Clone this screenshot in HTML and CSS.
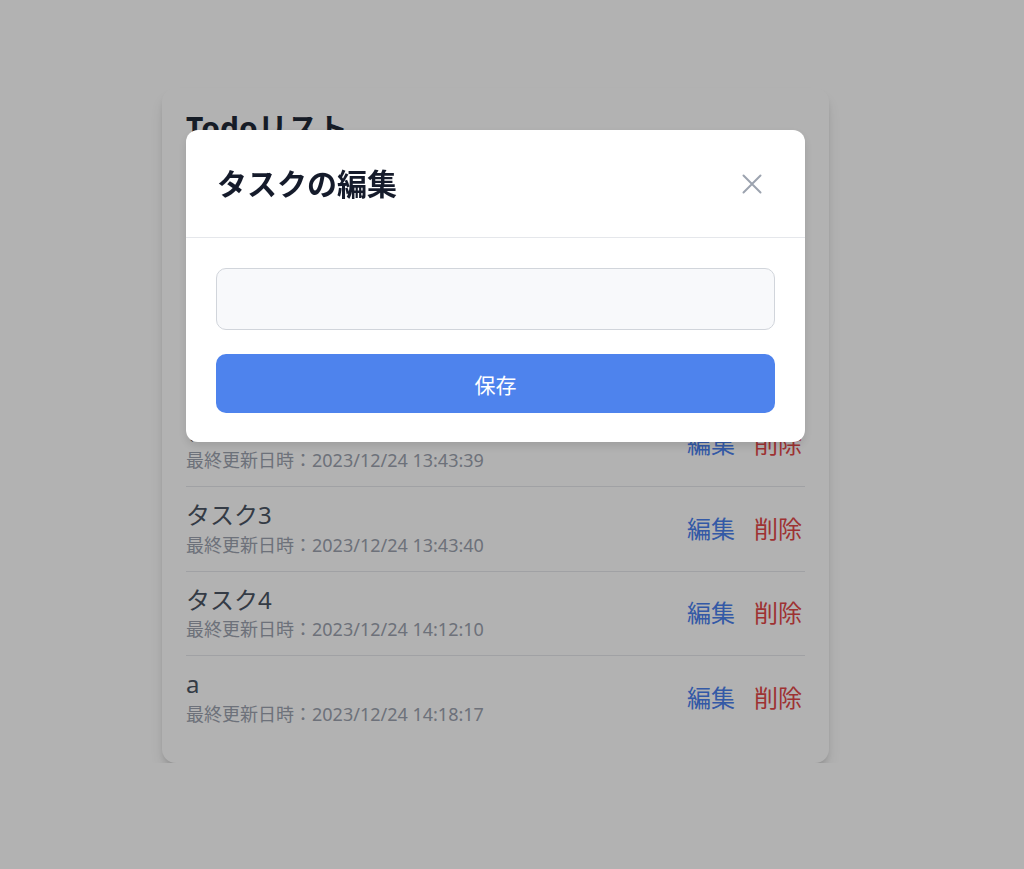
FILE: index.html
```html
<!DOCTYPE html>
<html lang="ja">
<head>
<meta charset="utf-8">
<title>Todoリスト</title>
<link rel="stylesheet" href="styles.css">
</head>
<body>
<div class="page">
  <div class="card">
    <h1 class="card-title">Todoリスト</h1>
    <form class="add-form">
      <input class="add-input" type="text">
      <button class="add-button" type="button">追加</button>
    </form>
    <ul class="task-list">
      <li class="task">
        <div class="task-info">
          <div class="task-name">タスク1</div>
          <div class="task-date">最終更新日時：2023/12/24 13:43:38</div>
        </div>
        <div class="task-actions"><button class="btn-edit">編集</button><button class="btn-delete">削除</button></div>
      </li>
      <li class="task">
        <div class="task-info">
          <div class="task-name">タスク2</div>
          <div class="task-date">最終更新日時：2023/12/24 13:43:39</div>
        </div>
        <div class="task-actions"><button class="btn-edit">編集</button><button class="btn-delete">削除</button></div>
      </li>
      <li class="task">
        <div class="task-info">
          <div class="task-name">タスク3</div>
          <div class="task-date">最終更新日時：2023/12/24 13:43:40</div>
        </div>
        <div class="task-actions"><button class="btn-edit">編集</button><button class="btn-delete">削除</button></div>
      </li>
      <li class="task">
        <div class="task-info">
          <div class="task-name">タスク4</div>
          <div class="task-date">最終更新日時：2023/12/24 14:12:10</div>
        </div>
        <div class="task-actions"><button class="btn-edit">編集</button><button class="btn-delete">削除</button></div>
      </li>
      <li class="task">
        <div class="task-info">
          <div class="task-name">a</div>
          <div class="task-date">最終更新日時：2023/12/24 14:18:17</div>
        </div>
        <div class="task-actions"><button class="btn-edit">編集</button><button class="btn-delete">削除</button></div>
      </li>
    </ul>
  </div>
</div>

<div class="overlay">
  <div class="overlay-inner">
    <div class="modal">
      <div class="modal-header">
        <h2 class="modal-title">タスクの編集</h2>
        <button class="modal-close" type="button" aria-label="閉じる">
          <svg width="20" height="20" viewBox="0 0 20 20" fill="none" stroke="#9ca3af" stroke-width="2" stroke-linecap="round">
            <path d="M1.5 1.5L18.5 18.5M18.5 1.5L1.5 18.5"/>
          </svg>
        </button>
      </div>
      <div class="modal-body">
        <input class="modal-input" type="text">
        <button class="save-button" type="button">保存</button>
      </div>
    </div>
  </div>
</div>
</body>
</html>
```

FILE: styles.css
```css
* {
  box-sizing: border-box;
}

html, body {
  margin: 0;
  padding: 0;
  background: #ffffff;
  font-family: "Noto Sans", "Noto Sans CJK JP", sans-serif;
}

.page {
  width: 991px;
  padding-top: 88px;
}

.card {
  width: 667px;
  margin: 0 auto;
  background: #ffffff;
  border-radius: 14px;
  padding: 22px 24px 23px;
  box-shadow: 0 10px 15px -3px rgba(0, 0, 0, 0.14), 0 4px 6px -2px rgba(0, 0, 0, 0.12);
}

.card-title {
  margin: 0;
  font-size: 30px;
  line-height: 36px;
  font-weight: 700;
  color: #1f2937;
}

.add-form {
  display: flex;
  flex-direction: column;
  gap: 12px;
  margin: 24px 0 40px;
}

.add-input {
  height: 48px;
  border: 1px solid #d1d5db;
  border-radius: 10px;
  background: #f9fafb;
  font-size: 18px;
  padding: 0 14px;
}

.add-button {
  height: 48px;
  border: none;
  border-radius: 10px;
  background: #4e83ed;
  color: #fff;
  font-size: 20px;
  font-family: inherit;
}

.task-list {
  list-style: none;
  margin: 0;
  padding: 0;
}

.task {
  display: flex;
  align-items: center;
  justify-content: space-between;
  padding: 12px 0;
  border-bottom: 1px solid #e5e7eb;
}

.task:last-child {
  border-bottom: none;
}

.task-name {
  font-size: 24px;
  line-height: 31.5px;
  color: #4b5563;
}

.task-date {
  font-size: 18px;
  line-height: 28px;
  color: #9ca3af;
}

.task-actions {
  display: flex;
  gap: 19px;
  padding-right: 3px;
}

.task-actions button {
  border: none;
  background: none;
  padding: 0;
  font-family: inherit;
  font-size: 24px;
  line-height: 32px;
}

.btn-edit {
  color: #4a80ee;
}

.btn-delete {
  color: #e34848;
}

.overlay {
  position: fixed;
  inset: 0;
  background: rgba(0, 0, 0, 0.3);
}

.overlay-inner {
  width: 991px;
  padding-top: 130px;
  display: flex;
  justify-content: center;
}

.modal {
  width: 619px;
  background: #ffffff;
  border-radius: 12px;
  box-shadow: 0 4px 10px rgba(0, 0, 0, 0.12);
}

.modal-header {
  height: 108px;
  display: flex;
  align-items: center;
  justify-content: space-between;
  padding: 0 43px 0 31px;
  border-bottom: 1px solid #e5e7eb;
}

.modal-title {
  margin: 0;
  font-size: 30px;
  line-height: 36px;
  font-weight: 700;
  color: #151b2b;
}

.modal-close {
  border: none;
  background: none;
  padding: 0;
  width: 20px;
  height: 20px;
  display: flex;
}

.modal-body {
  padding: 30px 30px 29px;
  display: flex;
  flex-direction: column;
  gap: 24px;
}

.modal-input {
  height: 62px;
  width: 100%;
  border: 1px solid #d1d5db;
  border-radius: 10px;
  background: #f8f9fb;
}

.save-button {
  height: 59px;
  width: 100%;
  border: none;
  border-radius: 10px;
  background: #4e83ed;
  color: #ffffff;
  font-family: inherit;
  font-size: 21px;
}
```
